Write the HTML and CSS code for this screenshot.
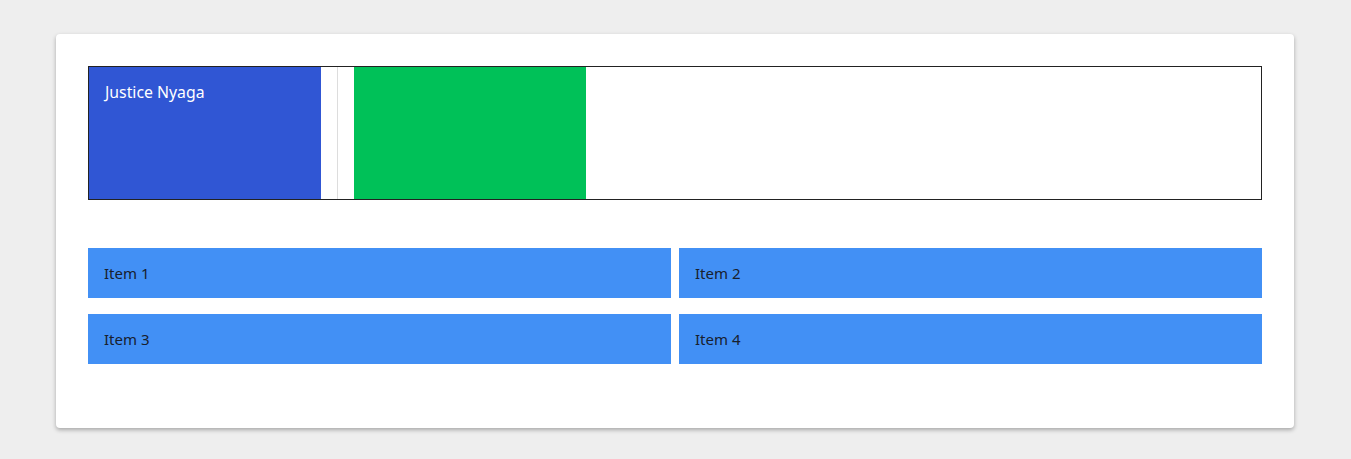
FILE: index.html
```html
<!DOCTYPE html>
<html>
<head>
<meta charset="utf-8">
<link rel="stylesheet" href="styles.css">
</head>
<body>
<div class="card">
  <div class="strip">
    <div class="panel panel-blue">Justice Nyaga</div>
    <div class="divider"></div>
    <div class="panel panel-green"></div>
  </div>
  <div class="grid">
    <div class="item">Item 1</div>
    <div class="item">Item 2</div>
    <div class="item">Item 3</div>
    <div class="item">Item 4</div>
  </div>
</div>
</body>
</html>
```
FILE: styles.css
```css
html, body {
  margin: 0;
  padding: 0;
}
body {
  background: #eeeeee;
  font-family: "Noto Sans", "Open Sans", sans-serif;
  font-size: 15px;
  padding: 34px 57px 31px 56px;
}
.card {
  background: #ffffff;
  border-radius: 4px;
  box-shadow: 0 2px 4px rgba(0,0,0,0.3);
  padding: 32px 32px 64px 32px;
}
.strip {
  border: 1px solid #222222;
  height: 132px;
  display: flex;
  gap: 16px;
}
.panel {
  width: 232px;
  box-sizing: border-box;
  padding: 16px;
  line-height: 18px;
}
.panel-blue {
  background: #3056d4;
  color: #ffffff;
  font-size: 15.8px;
  padding-top: 16px;
}
.panel-green {
  background: #00c158;
}
.divider {
  width: 1px;
  background: #dddddd;
}
.grid {
  margin-top: 48px;
  display: grid;
  grid-template-columns: 1fr 1fr;
  column-gap: 8px;
  row-gap: 16px;
}
.item {
  background: #4290f5;
  color: #18202e;
  height: 50px;
  padding: 0 16px;
  display: flex;
  align-items: center;
}
```
